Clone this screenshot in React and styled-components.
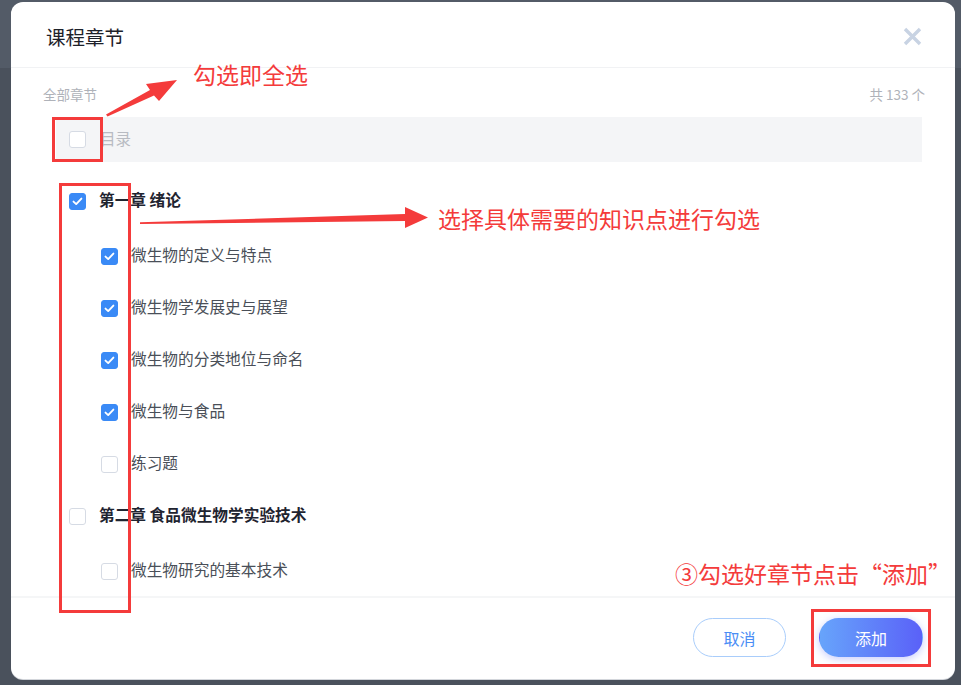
import React from 'react';
import styled, { createGlobalStyle } from 'styled-components';

const GlobalStyle = createGlobalStyle`
  html, body { margin: 0; padding: 0; }
  body {
    width: 961px;
    height: 685px;
    overflow: hidden;
    background: linear-gradient(#535b67 0 68px, #4a515c 68px);
    font-family: "Noto Sans CJK SC", "Noto Sans", sans-serif;
  }
`

const Page = styled.div`
  position: relative;
  width: 961px;
  height: 685px;
  padding: 2px 0 0 11px;
  box-sizing: border-box;
`

const Modal = styled.div`
  width: 944px;
  height: 677px;
  background: #fff;
  border-radius: 12px;
  box-shadow: 0 1px 0 #d3d6db;
  display: flex;
  flex-direction: column;
  overflow: hidden;
`

const Header = styled.div`
  height: 66px;
  flex-shrink: 0;
  display: flex;
  align-items: center;
  justify-content: space-between;
  padding: 4px 33px 0 35px;
  box-sizing: border-box;
  border-bottom: 1px solid #f1f2f4;
`

const Title = styled.h2`
  margin: 0;
  font-size: 19.5px;
  font-weight: 400;
  color: #1d2129;
`

const Close = styled.button`
  border: 0;
  background: none;
  padding: 0;
  width: 20px;
  height: 20px;
  display: flex;
  align-items: center;
  justify-content: center;
  cursor: pointer;
`

const Body = styled.div`
  flex: 1;
  overflow: hidden;
  padding: 17px 30px 0 32px;
`

const Summary = styled.div`
  display: flex;
  justify-content: space-between;
  font-size: 13.5px;
  line-height: 18px;
  color: #afb2b9;
`

const Label = styled.span`
  line-height: 1;
  padding-bottom: 2px;
`

const CatalogRow = styled.div`
  margin: 14px 3px 13px 13px;
  height: 45px;
  background: #f4f5f7;
  display: flex;
  align-items: center;
  padding-left: 13px;
  gap: 14px;
  font-size: 15.5px;
  color: #b8bbc2;
`

const Row = styled.div`
  height: 52px;
  display: flex;
  align-items: center;
  gap: 13px;
  padding-left: ${(props) => (props.sub ? '58px' : '26px')};
  font-size: 15.7px;
  font-weight: ${(props) => (props.sub ? 400 : 700)};
  color: ${(props) => (props.sub ? '#4a4f58' : '#1f2430')};
`

const Children = styled.div`
  margin-top: 3px;
`

const Box = styled.span`
  width: 17px;
  height: 17px;
  box-sizing: border-box;
  border-radius: 3px;
  flex-shrink: 0;
  border: 1px solid ${(props) => (props.checked ? '#3a8af6' : '#d6dbe4')};
  background: ${(props) => (props.checked ? '#3a8af6' : '#fff')};
  display: flex;
  align-items: center;
  justify-content: center;
`

const Footer = styled.div`
  height: 83px;
  flex-shrink: 0;
  border-top: 2px solid #f5f6f7;
  box-sizing: border-box;
  display: flex;
  align-items: flex-start;
  justify-content: flex-end;
  gap: 33px;
  padding: 20px 32px 0 0;
`

const Button = styled.button`
  height: 39px;
  width: ${(props) => (props.primary ? '104px' : '93px')};
  border-radius: 20px;
  font-family: inherit;
  font-size: 16px;
  cursor: pointer;
  border: 1px solid ${(props) => (props.primary ? 'transparent' : '#a9cdfb')};
  color: ${(props) => (props.primary ? '#fff' : '#4a8df5')};
  background: ${(props) => (props.primary ? 'linear-gradient(90deg, #67a4fb, #5a61f8)' : '#fff')};
  box-shadow: ${(props) => (props.primary ? '0 2px 9px rgba(92, 110, 250, 0.35)' : 'none')};
`

const Marks = styled.svg`
  position: absolute;
  left: 0;
  top: 0;
  pointer-events: none;
`

const Frame = styled.div`
  position: absolute;
  border: 3px solid #f43b3b;
  box-sizing: border-box;
  pointer-events: none;
`

const Note = styled.span`
  position: absolute;
  font-size: 23px;
  line-height: 23px;
  color: #f43b3b;
  white-space: nowrap;
`

const Check = () => (
  <svg width="11" height="9" viewBox="0 0 11 9">
    <path d="M1.5 4.6 L4.2 7.1 L9.4 1.6" fill="none" stroke="#fff" strokeWidth="1.9" strokeLinecap="round" strokeLinejoin="round" />
  </svg>
)

const Checkbox = ({ checked }) => <Box checked={checked}>{checked && <Check />}</Box>

const chapters = [
  {
    title: '第一章 绪论',
    checked: true,
    items: [
      { name: '微生物的定义与特点', checked: true },
      { name: '微生物学发展史与展望', checked: true },
      { name: '微生物的分类地位与命名', checked: true },
      { name: '微生物与食品', checked: true },
      { name: '练习题', checked: false },
    ],
  },
  {
    title: '第二章 食品微生物学实验技术',
    checked: false,
    items: [
      { name: '微生物研究的基本技术', checked: false },
    ],
  },
]

export default function App() {
  return (
    <>
      <GlobalStyle />
      <Page>
        <Modal>
          <Header>
            <Title>课程章节</Title>
            <Close aria-label="关闭">
              <svg width="19" height="19" viewBox="0 0 19 19">
                <path d="M2 2 L17 17 M17 2 L2 17" stroke="#c8d3e3" strokeWidth="3.4" />
              </svg>
            </Close>
          </Header>
          <Body>
            <Summary>
              <span>全部章节</span>
              <span>共 133 个</span>
            </Summary>
            <CatalogRow>
              <Checkbox />
              <Label>目录</Label>
            </CatalogRow>
            {chapters.map((ch) => (
              <div key={ch.title}>
                <Row>
                  <Checkbox checked={ch.checked} />
                  <Label>{ch.title}</Label>
                </Row>
                <Children>
                  {ch.items.map((item) => (
                    <Row sub key={item.name}>
                      <Checkbox checked={item.checked} />
                      <Label>{item.name}</Label>
                    </Row>
                  ))}
                </Children>
              </div>
            ))}
          </Body>
          <Footer>
            <Button>取消</Button>
            <Button primary>添加</Button>
          </Footer>
        </Modal>

        <Marks width="961" height="685" viewBox="0 0 961 685">
          <polygon points="106,114.5 150,90 146,84 177,80 159,101 154,95.5 107.5,116.5" fill="#f43b3b" />
          <polygon points="140,222.3 405,214 405,207 428,217.5 405,228 405,221 140,224" fill="#f43b3b" />
        </Marks>
        <Frame style={{ left: 52, top: 117, width: 51, height: 45 }} />
        <Frame style={{ left: 59, top: 183, width: 72, height: 430 }} />
        <Frame style={{ left: 811, top: 609, width: 120, height: 58 }} />
        <Note style={{ left: 193, top: 63 }}>勾选即全选</Note>
        <Note style={{ left: 438, top: 207 }}>选择具体需要的知识点进行勾选</Note>
        <Note style={{ left: 675, top: 562 }}>③勾选好章节点击“添加”</Note>
      </Page>
    </>
  )
}
